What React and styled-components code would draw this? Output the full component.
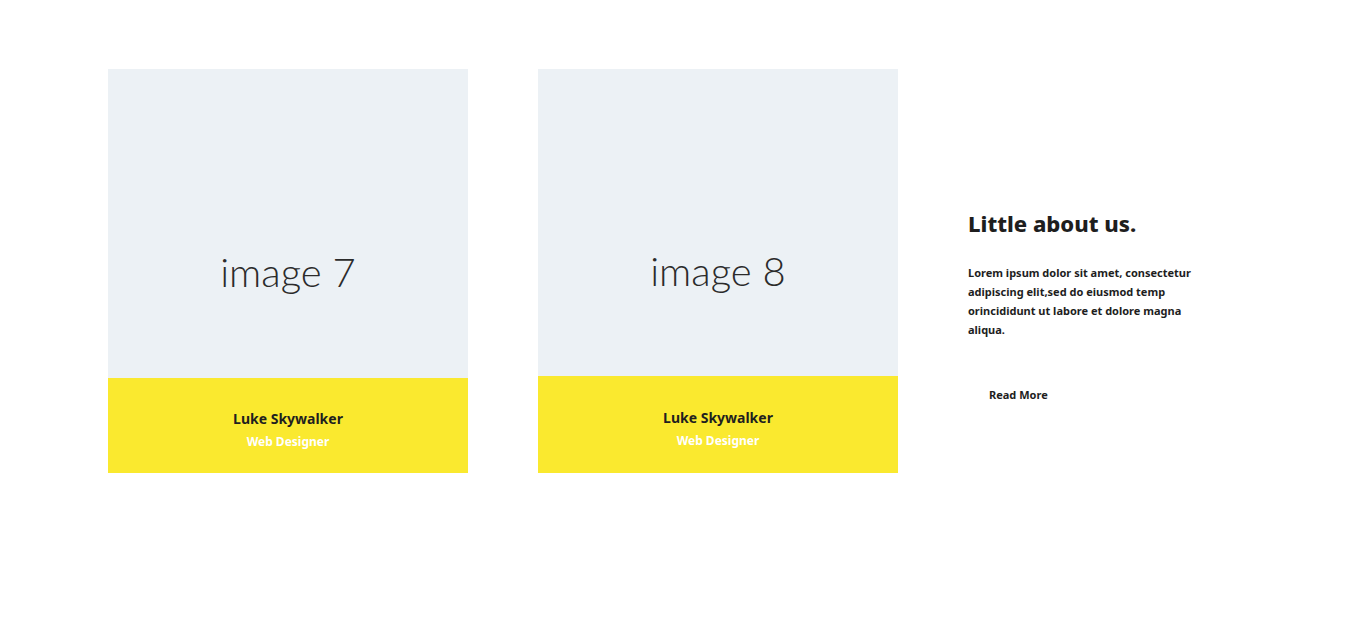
import React from 'react';
import styled, { createGlobalStyle } from 'styled-components';

const GlobalStyle = createGlobalStyle`
  body {
    margin: 0;
    background: #ffffff;
    font-family: "Noto Sans", Lato, sans-serif;
  }
`;

const team = [
  { id: 7, name: 'Luke Skywalker', role: 'Web Designer', imgHeight: 309 },
  { id: 8, name: 'Luke Skywalker', role: 'Web Designer', imgHeight: 307 },
];

const App = () => (
  <>
    <GlobalStyle />
    <Section>
      {team.map((m) => (
        <Card key={m.id}>
          <ImageBox $h={m.imgHeight}>image {m.id}</ImageBox>
          <Footer>
            <h4>{m.name}</h4>
            <span>{m.role}</span>
          </Footer>
        </Card>
      ))}
      <About>
        <h2>Little about us.</h2>
        <p>
          Lorem ipsum dolor sit amet, consectetur adipiscing elit,sed do eiusmod temp
          orincididunt ut labore et dolore magna aliqua.
        </p>
        <button>Read More</button>
      </About>
    </Section>
  </>
);

const Section = styled.div`
  display: flex;
  gap: 70px;
  padding: 69px 0 0 108px;
  height: 573px;
`;

const Card = styled.div`
  width: 360px;
  height: 404px;
  display: flex;
  flex-direction: column;
`;

const ImageBox = styled.div`
  height: ${(p) => p.$h}px;
  background: #ecf1f5;
  display: flex;
  align-items: center;
  justify-content: center;
  font-family: Lato, sans-serif;
  font-weight: 300;
  font-size: 40px;
  color: #2b2b2b;
  padding-top: 96px;
  box-sizing: border-box;
`;

const Footer = styled.div`
  flex: 1;
  background: #fae92f;
  display: flex;
  flex-direction: column;
  align-items: center;
  justify-content: center;
  padding-top: 8px;
  h4 {
    margin: 0;
    font-size: 14px;
    line-height: 18px;
    font-weight: 700;
    color: #1f1f1f;
  }
  span {
    margin-top: 6px;
    font-size: 12px;
    line-height: 16px;
    font-weight: 700;
    color: #ffffff;
  }
`;

const About = styled.div`
  width: 232px;
  padding-top: 139px;
  h2 {
    margin: 0;
    font-size: 22px;
    font-weight: 800;
    color: #1e1e1e;
    line-height: 30px;
  }
  p {
    margin: 25px 0 0;
    font-size: 11px;
    line-height: 19px;
    font-weight: 700;
    color: #1e1e1e;
  }
  button {
    margin-top: 44px;
    padding: 4px 21px;
    background: none;
    border: none;
    font-family: inherit;
    font-size: 11px;
    font-weight: 700;
    color: #1e1e1e;
  }
`;

export default App;
